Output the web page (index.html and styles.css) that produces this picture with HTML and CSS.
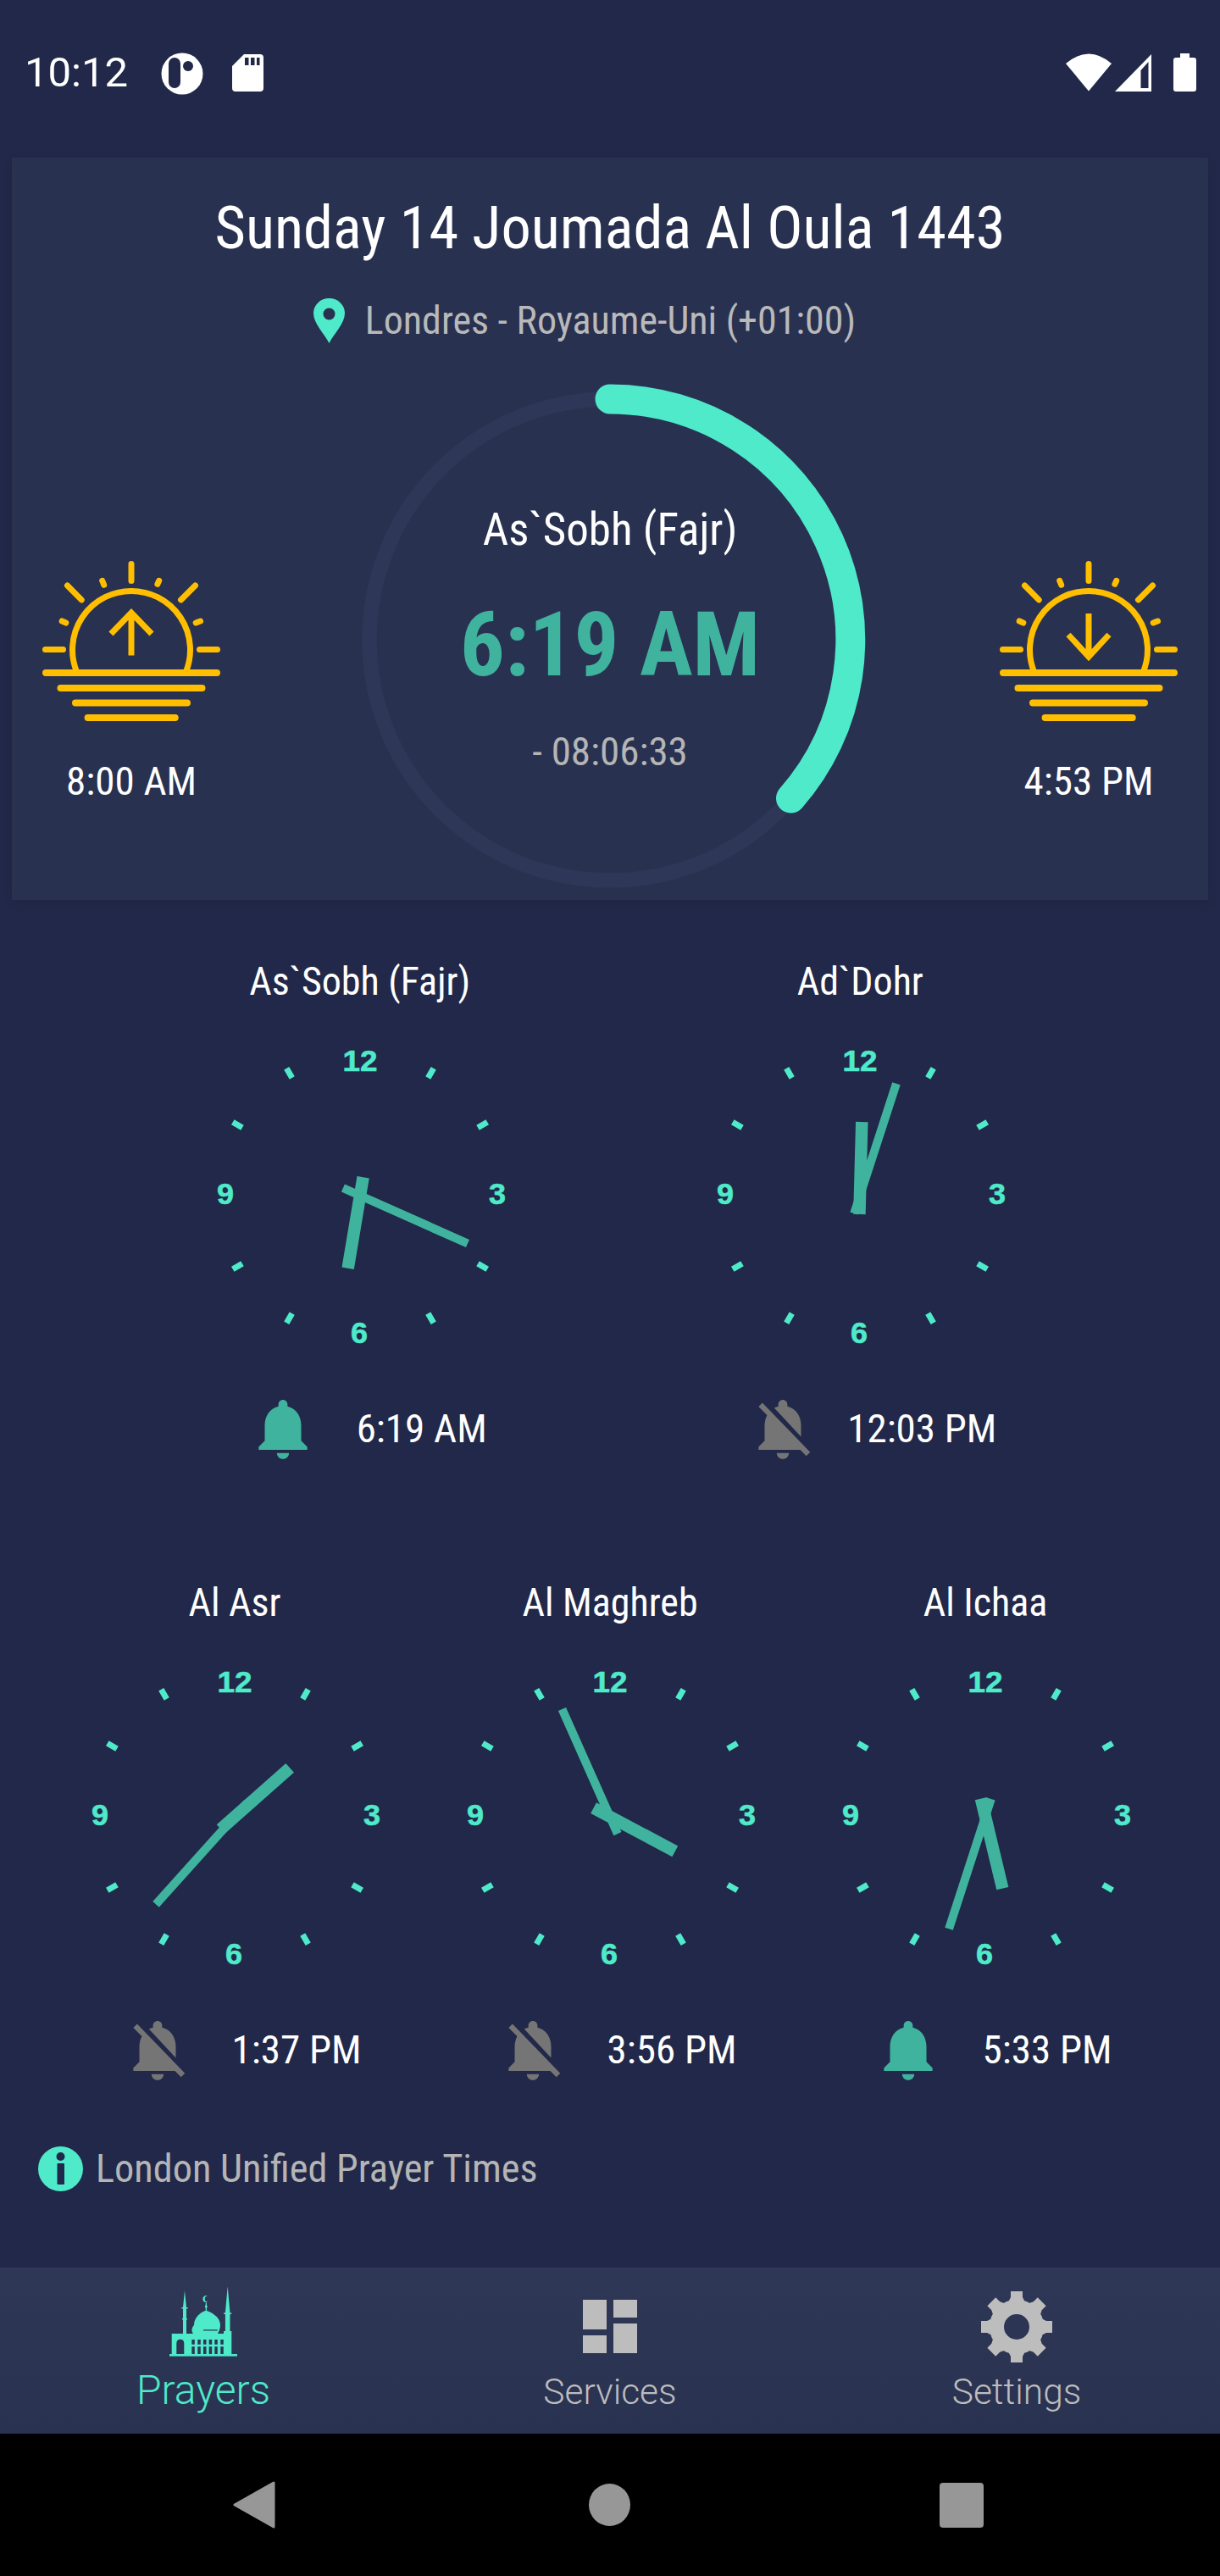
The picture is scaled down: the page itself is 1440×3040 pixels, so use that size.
FILE: index.html
```html
<!DOCTYPE html>
<html lang="en">
<head>
    <meta charset="UTF-8">
    <meta name="viewport" content="width=device-width, initial-scale=1.0">
    <title>Prayer Times</title>
    <link rel="stylesheet" href="styles.css">
</head>
<body>

<svg class="defs" aria-hidden="true">
    <defs>
        <g id="face">
            <rect class="tick" x="-3.500" y="-173.500" width="7" height="13" transform="rotate(30)"/>
            <rect class="tick" x="-3.500" y="-173.500" width="7" height="13" transform="rotate(60)"/>
            <rect class="tick" x="-3.500" y="-173.500" width="7" height="13" transform="rotate(120)"/>
            <rect class="tick" x="-3.500" y="-173.500" width="7" height="13" transform="rotate(150)"/>
            <rect class="tick" x="-3.500" y="-173.500" width="7" height="13" transform="rotate(210)"/>
            <rect class="tick" x="-3.500" y="-173.500" width="7" height="13" transform="rotate(240)"/>
            <rect class="tick" x="-3.500" y="-173.500" width="7" height="13" transform="rotate(300)"/>
            <rect class="tick" x="-3.500" y="-173.500" width="7" height="13" transform="rotate(330)"/>
            <text class="num" x="0" y="-147" textLength="41" lengthAdjust="spacingAndGlyphs">12</text>
            <text class="num" x="162" y="10" textLength="20" lengthAdjust="spacingAndGlyphs">3</text>
            <text class="num" x="-1" y="174" textLength="20" lengthAdjust="spacingAndGlyphs">6</text>
            <text class="num" x="-159" y="10" textLength="20" lengthAdjust="spacingAndGlyphs">9</text>
        </g>
        <g id="sun-base">
            <path class="sun-line" d="M46 137A69.500 69.500 0 1 1 174 137"/>
            <path class="sun-line round" d="M110 8.500V28.500M8.500 109.500H29.500M190.500 109.500H211.500M34.500 34L51.200 50.900M185.500 34L168.500 50.900M75.700 28.300L77.700 33.300M142.700 28.300L140.900 32.400M28.200 76L32.800 78M191.500 76L186.200 78"/>
            <path class="sun-line round thick" d="M9 137H211M26.500 155H193.500M44 172.500H176M58.600 190H161.700"/>
        </g>
        <path id="bell-on" d="M12 22c1.100 0 2-.9 2-2h-4c0 1.100.89 2 2 2zm6-6v-5c0-3.070-1.640-5.640-4.500-6.320V4c0-.83-.67-1.500-1.500-1.500s-1.500.67-1.500 1.500v.68C7.630 5.360 6 7.920 6 11v5l-2 2v1h16v-1l-2-2z"/>
        <path id="bell-off" d="M20 18.690L7.840 6.140 5.270 3.490 4 4.760l2.800 2.800v.01c-.52.99-.8 2.160-.8 3.420v5l-2 2v1h13.730l2 2L21 19.720l-1-1.030zM12 22c1.110 0 2-.89 2-2h-4c0 1.110.89 2 2 2zm6-7.320V11c0-3.080-1.640-5.640-4.500-6.320V4c0-.83-.67-1.500-1.500-1.500s-1.500.67-1.500 1.500v.68c-.15.03-.29.08-.42.12-.1.03-.2.07-.3.11h-.01c-.2.08-.4.17-.59.27-.01 0-.01 0-.02.01L18 14.680z"/>
    </defs>
</svg>

<header class="status-bar">
    <span class="clock-text">10:12</span>
    <svg class="status-icon dot-icon" viewBox="0 0 50 50">
        <circle cx="25" cy="25" r="24.500" fill="#fff"/>
        <rect x="9" y="6" width="14" height="36" rx="7" fill="#212849"/>
        <circle cx="32" cy="16" r="6" fill="#212849"/>
    </svg>
    <svg class="status-icon sd-icon" viewBox="0 0 37 44">
        <path fill="#fff" d="M14 0H33A4 4 0 0 1 37 4V40A4 4 0 0 1 33 44H4A4 4 0 0 1 0 40V14Z"/>
        <path fill="#212849" d="M15 4h4.500v9H15zM22 4h4.500v9H22zM29 4h3.500v9H29z"/>
    </svg>
    <div class="status-right">
        <svg class="wifi-icon" viewBox="0 0 54 45">
            <path fill="#fff" d="M27 44.500L0 12Q27 -11 54 12Z"/>
        </svg>
        <svg class="signal-icon" viewBox="0 0 43 44">
            <path fill="#fff" d="M43 0V44H0Z"/>
            <path fill="#212849" d="M30.500 19L39.500 9V40H30.500Z"/>
        </svg>
        <svg class="battery-icon" viewBox="0 0 27 45">
            <path fill="#fff" d="M8 0H19V5H24A3 3 0 0 1 27 8V42A3 3 0 0 1 24 45H3A3 3 0 0 1 0 42V8A3 3 0 0 1 3 5H8Z"/>
        </svg>
    </div>
</header>

<section class="card">
    <h1 class="date">Sunday 14 Joumada Al Oula 1443</h1>
    <div class="location">
        <svg class="pin" viewBox="0 0 37 53">
            <path fill="#4eeaca" fill-rule="evenodd" d="M18.500 53C13 42 0 30 0 17.500A18.500 17.500 0 0 1 37 17.500C37 30 24 42 18.500 53ZM18.500 11.500A7 7 0 1 0 18.500 25.500A7 7 0 1 0 18.500 11.500Z"/>
        </svg>
        <span>Londres - Royaume-Uni (+01:00)</span>
    </div>
    <div class="next-row">
        <div class="sun-col">
            <svg class="sun-icon" viewBox="0 0 220 200">
                <use href="#sun-base"/>
                <path class="sun-line" d="M110 116.500V67M86 91L110 66L134 91"/>
            </svg>
            <span class="time-text">8:00 AM</span>
        </div>
        <div class="ring">
            <svg class="ring-svg" viewBox="0 0 604 604">
                <circle class="ring-track" cx="302" cy="302" r="284"/>
                <path class="ring-value" d="M302 18A284 284 0 0 1 515.500 489"/>
            </svg>
            <div class="ring-text">
                <div class="ring-name">As`Sobh (Fajr)</div>
                <div class="ring-time">6:19 AM</div>
                <div class="ring-left">- 08:06:33</div>
            </div>
        </div>
        <div class="sun-col">
            <svg class="sun-icon" viewBox="0 0 220 200">
                <use href="#sun-base"/>
                <path class="sun-line" d="M110 67V117M86 92L110 118L134 92"/>
            </svg>
            <span class="time-text">4:53 PM</span>
        </div>
    </div>
</section>

<main class="prayers">
    <div class="prayer-row">
        <div class="prayer">
            <div class="prayer-name">As`Sobh (Fajr)</div>
            <svg class="dial" viewBox="-166 -180 332 360">
                <use href="#face"/>
                <rect class="hand" x="-7.250" y="-87" width="14.500" height="109" transform="rotate(189.500)"/>
                <rect class="hand" x="-5" y="-139" width="10" height="161" transform="rotate(114)"/>
            </svg>
            <div class="prayer-time">
                <svg class="bell on" viewBox="0 0 24 24"><use href="#bell-on"/></svg>
                <span class="time-text">6:19 AM</span>
            </div>
        </div>
        <div class="prayer">
            <div class="prayer-name">Ad`Dohr</div>
            <svg class="dial" viewBox="-166 -180 332 360">
                <use href="#face"/>
                <rect class="hand" x="-7.250" y="-87" width="14.500" height="109" transform="rotate(1.500)"/>
                <rect class="hand" x="-5" y="-139" width="10" height="161" transform="rotate(18)"/>
            </svg>
            <div class="prayer-time">
                <svg class="bell off" viewBox="0 0 24 24"><use href="#bell-off"/></svg>
                <span class="time-text">12:03 PM</span>
            </div>
        </div>
    </div>
    <div class="prayer-row second">
        <div class="prayer">
            <div class="prayer-name">Al Asr</div>
            <svg class="dial" viewBox="-166 -180 332 360">
                <use href="#face"/>
                <rect class="hand" x="-7.250" y="-87" width="14.500" height="109" transform="rotate(48.500)"/>
                <rect class="hand" x="-5" y="-139" width="10" height="161" transform="rotate(222)"/>
            </svg>
            <div class="prayer-time">
                <svg class="bell off" viewBox="0 0 24 24"><use href="#bell-off"/></svg>
                <span class="time-text">1:37 PM</span>
            </div>
        </div>
        <div class="prayer">
            <div class="prayer-name">Al Maghreb</div>
            <svg class="dial" viewBox="-166 -180 332 360">
                <use href="#face"/>
                <rect class="hand" x="-7.250" y="-87" width="14.500" height="109" transform="rotate(118)"/>
                <rect class="hand" x="-5" y="-139" width="10" height="161" transform="rotate(336)"/>
            </svg>
            <div class="prayer-time">
                <svg class="bell off" viewBox="0 0 24 24"><use href="#bell-off"/></svg>
                <span class="time-text">3:56 PM</span>
            </div>
        </div>
        <div class="prayer">
            <div class="prayer-name">Al Ichaa</div>
            <svg class="dial" viewBox="-166 -180 332 360">
                <use href="#face"/>
                <rect class="hand" x="-7.250" y="-87" width="14.500" height="109" transform="rotate(166.500)"/>
                <rect class="hand" x="-5" y="-139" width="10" height="161" transform="rotate(198)"/>
            </svg>
            <div class="prayer-time">
                <svg class="bell on" viewBox="0 0 24 24"><use href="#bell-on"/></svg>
                <span class="time-text">5:33 PM</span>
            </div>
        </div>
    </div>
    <div class="info">
        <svg class="info-icon" viewBox="0 0 53 53">
            <circle cx="26.500" cy="26.500" r="26.500" fill="#4eeaca"/>
            <circle cx="26.500" cy="12" r="5" fill="#212849"/>
            <rect x="22.500" y="20" width="8.500" height="25" rx="1" fill="#212849"/>
        </svg>
        <span>London Unified Prayer Times</span>
    </div>
</main>

<nav class="tabs">
    <div class="tab active">
        <svg class="tab-icon" viewBox="0 0 96 96">
            <g fill="#4eeaca">
                <rect x="8" y="84" width="80" height="2.700"/>
                <path fill-rule="evenodd" d="M10.700 60H81.300V84H10.700ZM16.300 84V71.500Q16.300 66.700 20.800 66.700Q25.300 66.700 25.300 71.500V84ZM34.300 67h3.500v5.700h-3.500zM41.300 67h3.500v5.700h-3.500zM48 67h3.500v5.700H48zM54.700 67h3.500v5.700h-3.500zM61.300 67h3.500v5.700h-3.500zM68.300 67h3.500v5.700h-3.500zM34.300 75.300h3.500V84h-3.500zM41.300 75.300h3.500V84h-3.500zM48 75.300h3.500V84H48zM54.700 75.300h3.500V84h-3.500zM61.300 75.300h3.500V84h-3.500zM68.300 75.300h3.500V84h-3.500z"/>
                <path d="M26 9.300L28 29H29.700V30.500H28V42H29V43.500H28V60H24V43.500H23V42H24V30.500H22.300V29H24Z"/>
                <path d="M76.700 4.300L79.500 35.500H81.300V37H79.500V57H81.300V60H72V57H73.900V37H72V35.500H73.900Z"/>
                <path d="M51.300 32.700C60 35 68 42 68 50C68 54 66.500 57 65 60H36C33 56 35 52 37 50C37 42 43 35 51.300 32.700Z"/>
                <rect x="50.700" y="24" width="1.300" height="9"/>
                <circle cx="51.300" cy="28" r="1.500"/>
                <path d="M53 15.500A4 4 0 1 0 53.500 22.500A3.200 3.200 0 1 1 53 15.500Z"/>
            </g>
            <rect x="48" y="55.300" width="16.700" height="1.200" fill="#2b3352"/>
        </svg>
        <span class="tab-label">Prayers</span>
    </div>
    <div class="tab">
        <svg class="tab-icon" viewBox="0 0 96 96">
            <path fill="#bdbdbd" d="M16 20H44V55H16ZM16 62H44V83H16ZM52 20H80V41H52ZM52 48H80V83H52Z"/>
        </svg>
        <span class="tab-label small">Services</span>
    </div>
    <div class="tab">
        <svg class="tab-icon" viewBox="-48 -48 96 96">
            <g fill="#bdbdbd" transform="translate(0 4)">
                <circle cx="0" cy="0" r="23.500" fill="none" stroke="#bdbdbd" stroke-width="17"/>
                <path id="tooth" d="M-7 -42H7V-35L11 -27H-11L-7 -35Z"/>
                <use href="#tooth" transform="rotate(45)"/>
                <use href="#tooth" transform="rotate(90)"/>
                <use href="#tooth" transform="rotate(135)"/>
                <use href="#tooth" transform="rotate(180)"/>
                <use href="#tooth" transform="rotate(225)"/>
                <use href="#tooth" transform="rotate(270)"/>
                <use href="#tooth" transform="rotate(315)"/>
            </g>
        </svg>
        <span class="tab-label small">Settings</span>
    </div>
</nav>

<footer class="nav-bar">
    <svg class="nav-back" viewBox="0 0 50 56"><path fill="#979797" stroke="#979797" stroke-width="3" stroke-linejoin="round" d="M48 2V54L2 28Z"/></svg>
    <span class="nav-circle"></span>
    <span class="nav-square"></span>
</footer>

</body>
</html>
```

FILE: styles.css
```css
* {
    box-sizing: border-box;
}
body {
    margin: 0;
    width: 1440px;
    height: 3040px;
    background-color: #212849;
    color: #fff;
    font-family: Roboto, sans-serif;
    font-stretch: 75%;
    display: flex;
    flex-direction: column;
    overflow: hidden;
}
.defs {
    display: block;
    width: 0;
    height: 0;
}

/* status bar */
.status-bar {
    height: 186px;
    flex: none;
    display: flex;
    align-items: flex-start;
    padding: 62px 28px 0 29px;
}
.clock-text {
    font-size: 49px;
    line-height: 48px;
    font-stretch: 100%;
}
.status-icon {
    display: block;
}
.dot-icon {
    width: 50px;
    height: 50px;
    margin-left: 39px;
}
.sd-icon {
    width: 37px;
    height: 44px;
    margin: 2px 0 0 34px;
}
.status-right {
    margin-left: auto;
    display: flex;
    align-items: flex-start;
    gap: 4px;
}
.wifi-icon {
    width: 54px;
    height: 45px;
    margin-top: 1px;
}
.signal-icon {
    width: 43px;
    height: 44px;
    margin: 2px 22px 0 0;
}
.battery-icon {
    width: 27px;
    height: 45px;
    margin-top: 1px;
}

/* next prayer card */
.card {
    flex: none;
    height: 876px;
    margin: 0 14px;
    padding-top: 48px;
    background: #293151;
    box-shadow: 0 3px 12px rgba(0, 0, 0, 0.08);
}
.date {
    margin: 0;
    font-size: 70.400px;
    font-weight: 400;
    line-height: 70px;
    text-align: center;
}
.location {
    height: 50px;
    margin-top: 49px;
    padding-right: 60px;
    display: flex;
    justify-content: center;
    align-items: center;
    gap: 24px;
    font-size: 46px;
    line-height: 50px;
    color: #b9b9b9;
}
.pin {
    width: 37px;
    height: 53px;
}
.next-row {
    margin-top: 50px;
    display: grid;
    grid-template-columns: 282px 1fr 282px;
}
.sun-col {
    padding-top: 204px;
    display: flex;
    flex-direction: column;
    align-items: center;
}
.sun-icon {
    width: 220px;
    height: 200px;
}
.sun-line {
    fill: none;
    stroke: #ffbf00;
    stroke-width: 7;
}
.sun-line.round {
    stroke-linecap: round;
}
.sun-line.thick {
    stroke-width: 8;
}
.time-text {
    font-size: 47px;
    line-height: 50px;
}
.sun-col .time-text {
    margin-top: 40px;
}
.ring {
    justify-self: center;
    width: 604px;
    height: 604px;
    display: grid;
}
.ring-svg, .ring-text {
    grid-area: 1 / 1;
}
.ring-track {
    fill: none;
    stroke: #2f3758;
    stroke-width: 17.5;
}
.ring-value {
    fill: none;
    stroke: #4eeaca;
    stroke-width: 35;
    stroke-linecap: round;
}
.ring-text {
    padding-top: 142px;
    text-align: center;
}
.ring-name {
    font-size: 53px;
    line-height: 60px;
}
.ring-time {
    margin-top: 47px;
    font-size: 105px;
    font-weight: 700;
    line-height: 120px;
    color: #3fb39d;
}
.ring-left {
    margin-top: 40px;
    font-size: 47px;
    line-height: 50px;
    color: #b5b5b5;
}

/* prayer clocks */
.prayers {
    padding-top: 71px;
}
.prayer-row {
    display: flex;
    justify-content: space-evenly;
}
.prayer-row.second {
    margin-top: 137px;
}
.prayer {
    width: 332px;
}
.prayer-name {
    font-size: 46px;
    line-height: 50px;
    text-align: center;
}
.dial {
    display: block;
    width: 332px;
    height: 360px;
    margin-top: 48px;
    overflow: visible;
}
.tick {
    fill: #4eeaca;
}
.num {
    fill: #4eeaca;
    stroke: #4eeaca;
    stroke-width: 0.6;
    font-family: "Liberation Sans", sans-serif;
    font-size: 35px;
    font-weight: 700;
    text-anchor: middle;
}
.hand {
    fill: #3fb39d;
}
.prayer-time {
    margin-top: 52px;
    display: grid;
    grid-template-columns: 150px 178px;
    align-items: center;
    justify-items: center;
}
.bell {
    width: 86px;
    height: 86px;
}
.bell.on {
    fill: #3fb39d;
}
.bell.off {
    fill: #757575;
}
.info {
    margin: 71px 0 0 45px;
    display: flex;
    align-items: center;
    gap: 15px;
    font-size: 46.300px;
    line-height: 53px;
    color: #b5b5b5;
}
.info-icon {
    width: 53px;
    height: 53px;
}

/* bottom tabs */
.tabs {
    margin-top: auto;
    flex: none;
    height: 196px;
    display: flex;
    background: linear-gradient(#2e3755, #2a3251);
}
.tab {
    flex: 1;
    padding-top: 18px;
    display: flex;
    flex-direction: column;
    align-items: center;
}
.tab-icon {
    width: 96px;
    height: 96px;
}
.tab-label {
    margin-top: 6px;
    font-size: 48px;
    font-weight: 300;
    font-stretch: 100%;
    line-height: 50px;
    color: #4eeaca;
}
.tab-label.small {
    margin-top: 5px;
    padding-top: 3px;
    font-size: 42.500px;
    color: #bdbdbd;
}

/* android nav bar */
.nav-bar {
    flex: none;
    height: 168px;
    background: #000;
    display: flex;
    align-items: center;
    padding-left: 275px;
}
.nav-back {
    width: 50px;
    height: 56px;
}
.nav-circle {
    width: 49px;
    height: 50px;
    margin-left: 370px;
    border-radius: 50%;
    background: #979797;
}
.nav-square {
    width: 52px;
    height: 53px;
    margin-left: 365px;
    border-radius: 4px;
    background: #979797;
}
```
